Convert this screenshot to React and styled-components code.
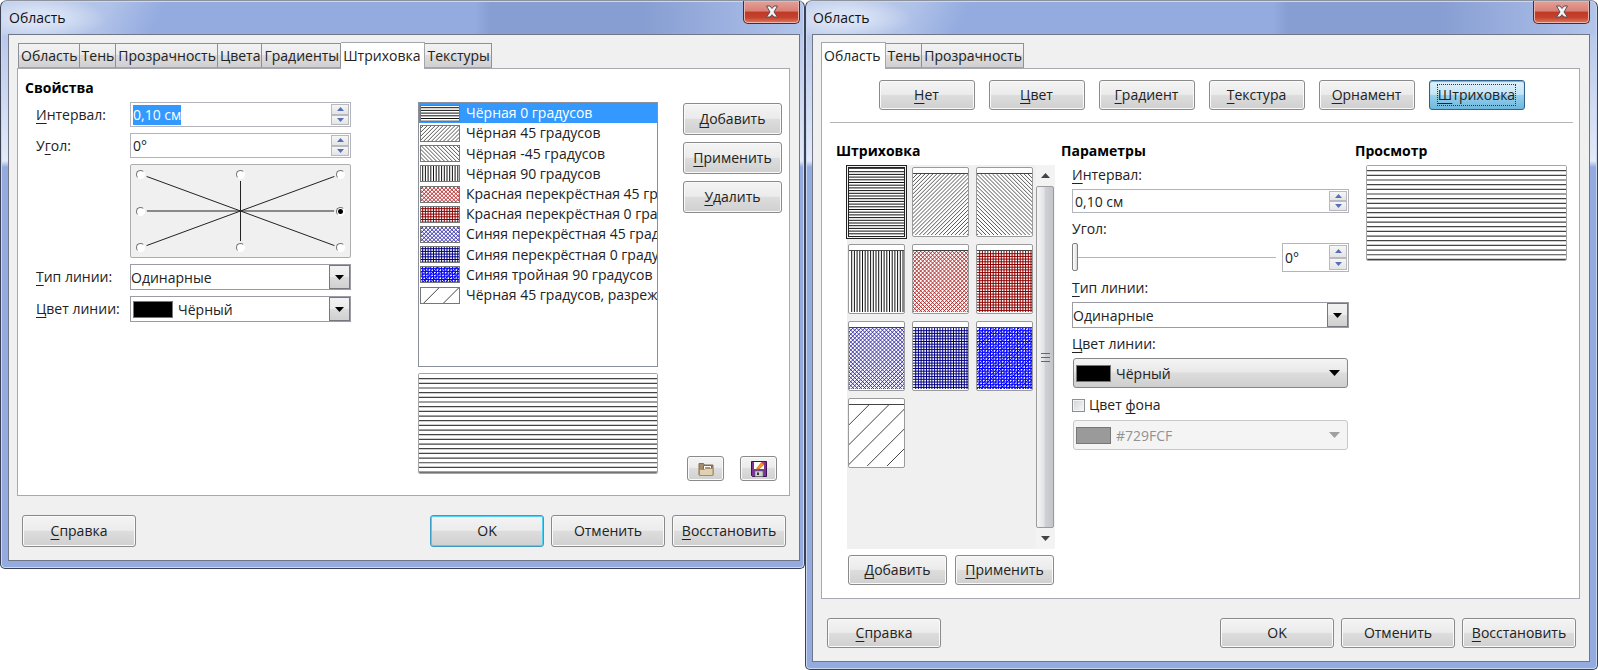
import React, { useEffect, useRef } from "react";
import styled, { createGlobalStyle, css } from "styled-components";

const GlobalStyle = createGlobalStyle`
  *, *::before, *::after {
    box-sizing: border-box;
  }

  body {
    margin: 0;
    background: #fff;
    color: #222;
    font-family: "Open Sans", "Noto Sans", sans-serif;
    font-size: 14px;
    line-height: 20px;
  }

  button, input, select {
    margin: 0;
    color: inherit;
    font: inherit;
  }
`;

const Desktop = styled.main`
  display: grid;
  grid-template-columns: 805fr 793fr;
  align-items: start;
`;

const Window = styled.section`
  min-width: 0;
  padding: ${(p) => (p.$right ? "0 7px 7px 6px" : "0 4px 7px 7px")};
  border: 1px solid #3a4152;
  border-top-color: #8d929c;
  border-radius: 7px 7px 5px 5px;
  background:
    radial-gradient(ellipse 70px 22px at 36px 17px, #d9e3f5 30%, transparent) no-repeat,
    linear-gradient(115deg, #bccbea 40px, #b0c2e8 100px, transparent 150px) 0 0 / 100% 34px no-repeat,
    linear-gradient(90deg, #93abdf 59%, #879ed2 61%, #879ed2 80%, #a4b8e4 94%, #b4c5ea) 0 0 / 100% 34px no-repeat,
    linear-gradient(#b9c8ea 34px, #e3eaf8 160px, #93abdf 166px);
  box-shadow: inset 0 0 0 1px #ccd8f1;
`;

const TitleBar = styled.header`
  display: flex;
  align-items: flex-start;
  justify-content: space-between;
  height: 33px;
`;

const WindowTitle = styled.h1`
  margin: 0;
  padding-top: 7px;
  padding-left: 1px;
  color: #111;
  font-size: 14px;
  font-weight: 400;
`;

const CloseButton = styled.button`
  display: flex;
  align-items: center;
  justify-content: center;
  width: 57px;
  height: 23px;
  padding: 0;
  border: 1px solid #5b2527;
  border-top: 0;
  border-radius: 0 0 5px 5px;
  background: linear-gradient(#e2a198, #d98076 46%, #bf3a26 50%, #c7422c 75%, #dd7a62);
  box-shadow: inset 0 0 0 1px #eab5ac;
`;

const Client = styled.div`
  padding: 7px 9px 13px 8px;
  border: 1px solid #717684;
  background: #f0f0f0;
`;

const TabBar = styled.div`
  display: flex;
  align-items: flex-end;
  height: 26px;
  padding-left: ${(p) => (p.$inset ? "1px" : "0")};
`;

const Tab = styled.button`
  height: 25px;
  padding: 1px 1px 0 2px;
  border: 1px solid #8f8f97;
  border-bottom-color: #a5a5ad;
  border-left-width: ${(p) => (p.$first ? "1px" : "0")};
  background: linear-gradient(#f2f2f2, #ebebeb 50%, #dddddd 50%, #d0d0d0);
  white-space: nowrap;

  ${(p) =>
    p.$active &&
    css`
      height: 27px;
      margin-bottom: -1px;
      padding: 0 4px 1px 2px;
      border-color: #a5a5ad;
      border-bottom: 0;
      background: #fff;
    `}
`;

const Panel = styled.div`
  padding: ${(p) => (p.$right ? "11px 6px 13px 8px" : "9px 7px 14px 7px")};
  border: 1px solid #a8a8b2;
  background: #fff;
`;

const Heading = styled.h2`
  margin: 0 0 4px;
  color: #000;
  font-size: 14px;
  font-weight: 700;
  line-height: 20px;
`;

const Footer = styled.footer`
  display: flex;
  gap: 7px;
  padding: ${(p) => (p.$right ? "19px 4px 0 6px" : "19px 4px 0 5px")};
`;

const Spacer = styled.div`
  flex: 1;
`;

const Button = styled.button`
  flex: none;
  width: ${(p) => p.$width}px;
  height: ${(p) => p.$height || 32}px;
  padding: 0;
  border: 1px solid #8a8a8a;
  border-radius: 3px;
  background: linear-gradient(#f4f4f4, #ebebeb 48%, #dddddd 50%, #d0d0d0);
  box-shadow: inset 0 0 0 1px #fafafa;
  white-space: nowrap;

  u {
    text-underline-offset: 3px;
  }

  ${(p) =>
    p.$default &&
    css`
      border-color: #3c9cc4;
      box-shadow: inset 0 0 0 1px #4fd0f4;
    `}

  ${(p) =>
    p.$pressed &&
    css`
      border-color: #2c628b;
      background: linear-gradient(#e2f2fb, #c3e4f6 48%, #98d1ef 50%, #6db7dd);
      box-shadow: inset 0 1px 1px #7fa9c4;
    `}
`;

const FocusRing = styled.span`
  display: inline-block;
  outline: 1px dotted #333;
`;

const HatchLayout = styled.div`
  display: grid;
  grid-template-columns: 1fr 240px 99px;
  gap: 25px;
`;

const Fields = styled.div`
  display: grid;
  grid-template-columns: 94px 1fr;
  align-content: start;
  gap: 6px 0;
  padding: 0 42px 0 11px;
`;

const Label = styled.label`
  display: block;
  padding-top: ${(p) => (p.$stacked ? "0" : "3px")};
  margin: ${(p) => (p.$stacked ? "6px 0 4px" : "0")};
  line-height: 20px;

  &:first-child {
    margin-top: 0;
  }

  u {
    text-underline-offset: 3px;
  }
`;

const SpinBox = styled.div`
  display: flex;
  width: ${(p) => (p.$width ? `${p.$width}px` : "100%")};
  height: ${(p) => p.$height || 25}px;
  padding: 1px;
  border: 1px solid #b4b4bc;
  background: #fff;
`;

const SpinInput = styled.input`
  flex: 1;
  min-width: 0;
  padding: 1px 0 0 1px;
  border: 0;
  outline: 0;
  background: transparent;

  &::selection {
    background: #3399ff;
    color: #fff;
  }
`;

const SpinButtons = styled.div`
  display: grid;
  grid-template-rows: 1fr 1fr;
  width: 18px;
`;

const SpinButton = styled.button`
  display: flex;
  align-items: center;
  justify-content: center;
  min-height: 0;
  padding: 0;
  border: 1px solid #b9b9c0;
  background: linear-gradient(#f6f6f6, #e4e4e6);
`;

const AngleBox = styled.div`
  position: relative;
  display: grid;
  grid-template-columns: repeat(3, 9px);
  justify-content: space-between;
  align-content: space-between;
  height: 94px;
  grid-column: 2;
  padding: 5px;
  border: 1px solid #adadad;
  border-radius: 2px;
  background: #f0f0f0;
`;

const AngleLines = styled.svg`
  position: absolute;
  inset: 0;
  width: 100%;
  height: 100%;
`;

const AngleRadio = styled.input`
  position: relative;
  width: 9px;
  height: 9px;
  appearance: none;
  border: 1px solid #fff;
  border-top-color: #777;
  border-left-color: #777;
  border-radius: 50%;
  background: #fff;
  box-shadow: 0 0 0 2px #f0f0f0;

  &:checked {
    background: radial-gradient(circle, #000 2px, #fff 3px);
  }
`;

const Combo = styled.div`
  display: flex;
  align-items: center;
  height: 26px;
  border: 1px solid #9b9ba3;
  background: #fff;
`;

const ComboSelect = styled.select`
  flex: 1;
  min-width: 0;
  height: 100%;
  padding: 1px 0 0 0;
  appearance: none;
  border: 0;
  outline: 0;
  background: transparent;
  opacity: 1;
`;

const ComboArrow = styled.span`
  display: flex;
  align-items: center;
  justify-content: center;
  width: 21px;
  height: 100%;
  border: 1px solid #77777d;
  background: linear-gradient(#f2f2f2, #ebebeb 50%, #dddddd 50%, #d0d0d0);
`;

const ColorButton = styled.div`
  display: flex;
  align-items: center;
  height: 30px;
  margin: 0 1px;
  padding: 0 7px 0 0;
  border: 1px solid ${(p) => (p.$disabled ? "#c8c8c8" : "#868686")};
  border-radius: 3px;
  background: ${(p) =>
    p.$disabled ? "#f4f4f4" : "linear-gradient(#f4f4f4, #e9e9e9 45%, #dddddd 50%, #cecece)"};
  color: ${(p) => (p.$disabled ? "#929292" : "inherit")};
`;

const Swatch = styled.span`
  flex: none;
  width: ${(p) => p.$width || 40}px;
  height: 17px;
  margin: 0 5px 0 2px;
  border: 1px solid #777;
  background: ${(p) => p.$color};
`;

const HatchList = styled.ul`
  display: grid;
  grid-template-rows: repeat(13, 1fr);
  height: 265px;
  margin: 0 0 6px;
  padding: 0;
  overflow: hidden;
  border: 1px solid #8b8f9b;
  list-style: none;
`;

const HatchItem = styled.li`
  display: flex;
  align-items: center;
  gap: 6px;
  min-width: 0;
  padding-left: 1px;
  overflow: hidden;
  background: ${(p) => (p.$selected ? "#3399ff" : "transparent")};
  color: ${(p) => (p.$selected ? "#fff" : "inherit")};
  line-height: 20px;
  white-space: nowrap;
`;

const Drawing = styled.svg`
  display: block;
  flex: none;
  background: #fff;
`;

const PreviewColumn = styled.div`
  padding-bottom: 7px;
`;

const Preview = styled.div`
  height: ${(p) => p.$height}px;
  overflow: hidden;
  border: 1px solid #a6a6a6;
  border-radius: 2px;
`;

const ActionColumn = styled.div`
  display: flex;
  flex-direction: column;
  gap: 7px;
  padding-top: 1px;
`;

const FileActions = styled.div`
  display: flex;
  gap: 16px;
  margin-top: auto;
  padding-left: 4px;
`;

const IconButton = styled(Button)`
  display: flex;
  align-items: center;
  justify-content: center;
`;

const ModeBar = styled.nav`
  display: flex;
  justify-content: center;
  gap: 14px;
  padding-bottom: 12px;
  margin-bottom: 18px;
  border-bottom: 1px solid #b4b4b4;
`;

const AreaLayout = styled.div`
  display: grid;
  grid-template-columns: 219px 1fr 212px;
  gap: 6px;
  padding: 0 6px;
`;

const Indented = styled.div`
  padding-left: 11px;
`;

const Gallery = styled.div`
  display: flex;
  justify-content: space-between;
  height: 384px;
  margin-bottom: 6px;
  background: #f0f0f0;
`;

const Thumbs = styled.div`
  display: grid;
  grid-template-columns: repeat(3, 57px);
  grid-auto-rows: 70px;
  align-content: start;
  gap: 7px;
  padding: 2px 0 0 1px;
`;

const Thumb = styled.button`
  padding: 0;
  overflow: hidden;
  border: 1px solid #9a9a9a;
  border-radius: 2px;
  background: #fff;

  ${(p) =>
    p.$selected &&
    css`
      border: 1px solid #222;
      border-radius: 0;
      outline: 1px solid #222;
      outline-offset: 1px;
    `}
`;

const ThumbFace = styled.span`
  display: block;
  margin-top: ${(p) => (p.$selected ? "0" : "3px")};
  border-top: 1px solid #444;
`;

const ScrollBar = styled.div`
  display: flex;
  flex-direction: column;
  width: 19px;
  background: #f3f3f3;
`;

const ScrollArrow = styled.button`
  display: flex;
  align-items: center;
  justify-content: center;
  height: 21px;
  padding: 0;
  border: 0;
  background: transparent;
`;

const ScrollThumb = styled.div`
  display: flex;
  flex: 1;
  align-items: center;
  justify-content: center;
  margin-right: 1px;
  border: 1px solid #9b9b9b;
  border-radius: 2px;
  background: linear-gradient(90deg, #f5f5f5, #e2e3e6 45%, #d0d1d5 50%, #c4c5ca);
`;

const ButtonRow = styled.div`
  display: flex;
  gap: 8px;
  padding-left: 1px;
`;

const SliderRow = styled.div`
  display: flex;
  gap: 6px;
`;

const Slider = styled.input`
  flex: 1;
  min-width: 0;
  height: 28px;
  appearance: none;
  background: linear-gradient(#b5b5b5, #b5b5b5) center / 100% 1px no-repeat;

  &::-webkit-slider-thumb {
    width: 6px;
    height: 28px;
    appearance: none;
    border: 1px solid #808080;
    border-radius: 2px;
    background: linear-gradient(90deg, #fff, #ddd);
  }
`;

const CheckRow = styled.label`
  display: flex;
  align-items: center;
  gap: 4px;
  margin: 7px 0 5px;

  u {
    text-underline-offset: 3px;
  }
`;

const CheckBox = styled.input`
  width: 13px;
  height: 13px;
  appearance: none;
  border: 1px solid #8e8f8f;
  background: linear-gradient(135deg, #cfd3d8, #f8f8f8);
  box-shadow: inset 0 0 0 1px #f4f4f4;
`;

// "_" marks the access key, as in the dialog resources
const Mnemonic = ({ text }) => {
  const at = text.indexOf("_");
  if (at < 0) return text;
  return (
    <>
      {text.slice(0, at)}
      <u>{text[at + 1]}</u>
      {text.slice(at + 2)}
    </>
  );
};

const Triangle = ({ up, size = 9, color = "#000" }) => (
  <svg width={size} height={Math.ceil(size / 2)} viewBox="0 0 10 5" preserveAspectRatio="none">
    <path d={up ? "M0 5 5 0 10 5Z" : "M0 0 5 5 10 0Z"} fill={color} />
  </svg>
);

const hatchPath = (angle, w, h, pitch) => {
  const parts = [];
  if (angle === 0) {
    for (let y = pitch; y <= h; y += pitch) parts.push(`M0 ${y}H${w}`);
  } else if (angle === 90) {
    for (let x = pitch; x <= w; x += pitch) parts.push(`M${x} 0V${h}`);
  } else {
    const step = pitch * Math.SQRT2;
    for (let x = step; x < w + h; x += step) {
      parts.push(angle === 45 ? `M${x} 0L${x - h} ${h}` : `M${w - x} 0L${w - x + h} ${h}`);
    }
  }
  return parts.join("");
};

const Hatch = ({ hatch, width, height, framed, pitch }) => (
  <Drawing width={width} height={height} aria-hidden="true">
    {hatch.angles.map((angle) => (
      <path
        key={angle}
        d={hatchPath(angle, width, height, pitch || hatch.pitch)}
        stroke={pitch ? "#444" : hatch.color}
        strokeWidth={pitch ? 1.2 : 1}
      />
    ))}
    {framed && <rect x=".5" y=".5" width={width - 1} height={height - 1} fill="none" stroke="#777" />}
  </Drawing>
);

const hatches = [
  { name: "Чёрная 0 градусов", color: "#111", angles: [0], pitch: 2.7 },
  { name: "Чёрная 45 градусов", color: "#555", angles: [45], pitch: 2.8 },
  { name: "Чёрная -45 градусов", color: "#555", angles: [-45], pitch: 2.8 },
  { name: "Чёрная 90 градусов", color: "#111", angles: [90], pitch: 2.7 },
  { name: "Красная перекрёстная 45 градусов", color: "#b03030", angles: [45, -45], pitch: 2.8 },
  { name: "Красная перекрёстная 0 градусов", color: "#8b0000", angles: [0, 90], pitch: 2.7 },
  { name: "Синяя перекрёстная 45 градусов", color: "#3a35a8", angles: [45, -45], pitch: 2.8 },
  { name: "Синяя перекрёстная 0 градусов", color: "#000080", angles: [0, 90], pitch: 2.7 },
  { name: "Синяя тройная 90 градусов", color: "#0000ff", angles: [0, 90, 45], pitch: 2.7 },
  { name: "Чёрная 45 градусов, разреженная", color: "#444", angles: [45], pitch: 14 },
];

const angleSteps = [135, 90, 45, 180, null, 0, 225, 270, 315];

const CloseIcon = () => (
  <svg width="16" height="14" viewBox="0 0 16 14">
    <path d="M2.500 1H6L8 3.500 10 1h3.500L10 7l3.500 5H10L8 9.700 6 12H2.500L6 7Z" fill="#f4f4f4" stroke="#5f4a52" strokeWidth="1" />
  </svg>
);

const FolderIcon = () => (
  <svg width="16" height="16" viewBox="0 0 16 16">
    <path d="M1 2.5h4.5l1 1.5H15v10H1Z" fill="#a58d6c" stroke="#846d4d" />
    <path d="M5.5 4.5h8V9h-8Z" fill="#fff" stroke="#6f6a62" />
    <path d="M7 6.500h5" stroke="#999" />
    <path d="M1.5 14.5V8.5h5l1-1h7.5v7Z" fill="#e2d0b0" stroke="#a38c67" />
  </svg>
);

const SaveIcon = () => (
  <svg width="16" height="16" viewBox="0 0 16 16">
    <path d="M.5.5h15v15h-14l-1-1Z" fill="#7a3596" stroke="#3b1250" />
    <path d="M3 1h10v7H3Z" fill="#fff" />
    <path d="M4 10h8v5.500H4Z" fill="#cfd3d4" stroke="#666" strokeWidth=".6" />
    <path d="M6 11.500h2V14H6Z" fill="#333" />
    <path d="M6 7 10.500 1.500 13 3.500 8 8 5.500 8.500Z" fill="#f59a1c" stroke="#b3550b" strokeWidth=".6" />
    <path d="M10.500 1.500 12 .5l1.500 1.500-.5 1.500Z" fill="#d8342a" />
  </svg>
);

const Spin = ({ id, value, width, height, selected, label }) => {
  const input = useRef(null);

  useEffect(() => {
    if (selected) {
      input.current.focus();
      input.current.select();
    }
  }, [selected]);

  return (
    <SpinBox $width={width} $height={height}>
      <SpinInput id={id} ref={input} defaultValue={value} aria-label={label} />
      <SpinButtons>
        <SpinButton aria-label="Больше">
          <Triangle up size={7} color="#5570b8" />
        </SpinButton>
        <SpinButton aria-label="Меньше">
          <Triangle size={7} color="#5570b8" />
        </SpinButton>
      </SpinButtons>
    </SpinBox>
  );
};

const Dropdown = ({ id, value, color }) => (
  <Combo>
    {color && <Swatch $color={color} />}
    <ComboSelect id={id}>
      <option>{value}</option>
    </ComboSelect>
    <ComboArrow>
      <Triangle />
    </ComboArrow>
  </Combo>
);

const ColorSelect = ({ id, value, color, disabled, label }) => (
  <ColorButton $disabled={disabled}>
    <Swatch $color={color} $width={35} />
    <ComboSelect id={id} disabled={disabled} aria-label={label}>
      <option>{value}</option>
    </ComboSelect>
    <Triangle size={11} color={disabled ? "#a0a0a0" : "#000"} />
  </ColorButton>
);

const Tabs = ({ items, active, inset }) => (
  <TabBar role="tablist" $inset={inset}>
    {items.map((item, i) => (
      <Tab key={item} role="tab" aria-selected={item === active} $active={item === active} $first={i === 0}>
        {item}
      </Tab>
    ))}
  </TabBar>
);

const Dialog = ({ right, children }) => (
  <Window $right={right}>
    <TitleBar>
      <WindowTitle>Область</WindowTitle>
      <CloseButton aria-label="Закрыть">
        <CloseIcon />
      </CloseButton>
    </TitleBar>
    <Client>{children}</Client>
  </Window>
);

const DialogFooter = ({ right, height }) => (
  <Footer $right={right}>
    <Button $width={114} $height={height}>
      <Mnemonic text="_Справка" />
    </Button>
    <Spacer />
    <Button $width={114} $height={height} $default={!right}>
      OK
    </Button>
    <Button $width={114} $height={height}>
      Отменить
    </Button>
    <Button $width={114} $height={height}>
      <Mnemonic text="_Восстановить" />
    </Button>
  </Footer>
);

const HatchDialog = () => (
  <Dialog>
    <Tabs
      inset
      items={["Область", "Тень", "Прозрачность", "Цвета", "Градиенты", "Штриховка", "Текстуры"]}
      active="Штриховка"
    />
    <Panel>
      <Heading>Свойства</Heading>
      <HatchLayout>
        <Fields>
          <Label htmlFor="distance">
            <Mnemonic text="_Интервал:" />
          </Label>
          <Spin id="distance" value="0,10 см" selected />
          <Label htmlFor="angle">
            <Mnemonic text="У_гол:" />
          </Label>
          <Spin id="angle" value="0°" />
          <AngleBox>
            <AngleLines viewBox="0 0 219 92" preserveAspectRatio="none">
              <path
                d="M9 9 210 83M9 83 210 9M9 46H210M109.500 9V83"
                fill="none"
                stroke="#222"
                vectorEffect="non-scaling-stroke"
              />
            </AngleLines>
            {angleSteps.map((step) =>
              step === null ? (
                <span key="center" />
              ) : (
                <AngleRadio
                  key={step}
                  type="radio"
                  name="angle-step"
                  aria-label={`${step}°`}
                  defaultChecked={step === 0}
                />
              )
            )}
          </AngleBox>
          <Label htmlFor="line-type">
            <Mnemonic text="_Тип линии:" />
          </Label>
          <Dropdown id="line-type" value="Одинарные" />
          <Label htmlFor="line-color">
            <Mnemonic text="_Цвет линии:" />
          </Label>
          <Dropdown id="line-color" value="Чёрный" color="#000" />
        </Fields>
        <PreviewColumn>
          <HatchList role="listbox" aria-label="Штриховка">
            {hatches.map((hatch, i) => (
              <HatchItem key={hatch.name} role="option" aria-selected={i === 0} $selected={i === 0}>
                <Hatch hatch={hatch} width={40} height={17} framed />
                {hatch.name}
              </HatchItem>
            ))}
          </HatchList>
          <Preview $height={101}>
            <Hatch hatch={hatches[0]} width={238} height={99} pitch={4.67} />
          </Preview>
        </PreviewColumn>
        <ActionColumn>
          <Button $width={99}>
            <Mnemonic text="_Добавить" />
          </Button>
          <Button $width={99}>
            <Mnemonic text="_Применить" />
          </Button>
          <Button $width={99}>
            <Mnemonic text="_Удалить" />
          </Button>
          <FileActions>
            <IconButton $width={37} $height={25} aria-label="Загрузить">
              <FolderIcon />
            </IconButton>
            <IconButton $width={37} $height={25} aria-label="Сохранить">
              <SaveIcon />
            </IconButton>
          </FileActions>
        </ActionColumn>
      </HatchLayout>
    </Panel>
    <DialogFooter />
  </Dialog>
);

const AreaDialog = () => (
  <Dialog right>
    <Tabs items={["Область", "Тень", "Прозрачность"]} active="Область" />
    <Panel $right>
      <ModeBar>
        {["_Нет", "_Цвет", "_Градиент", "_Текстура", "_Орнамент"].map((mode) => (
          <Button key={mode} $width={96} $height={30}>
            <Mnemonic text={mode} />
          </Button>
        ))}
        <Button $width={96} $height={30} $pressed aria-pressed="true">
          <FocusRing>
            <Mnemonic text="_Штриховка" />
          </FocusRing>
        </Button>
      </ModeBar>
      <AreaLayout>
        <div>
          <Heading>Штриховка</Heading>
          <Indented>
            <Gallery>
              <Thumbs>
                {hatches.map((hatch, i) => (
                  <Thumb key={hatch.name} $selected={i === 0} aria-label={hatch.name}>
                    <ThumbFace $selected={i === 0}>
                      <Hatch hatch={hatch} width={55} height={i === 0 ? 67 : 61} />
                    </ThumbFace>
                  </Thumb>
                ))}
              </Thumbs>
              <ScrollBar>
                <ScrollArrow aria-label="Вверх">
                  <Triangle up color="#444" />
                </ScrollArrow>
                <ScrollThumb>
                  <svg width="9" height="10" viewBox="0 0 9 10">
                    <path d="M0 1.500H9M0 5.500H9M0 9.500H9" stroke="#666" />
                  </svg>
                </ScrollThumb>
                <ScrollArrow aria-label="Вниз">
                  <Triangle color="#444" />
                </ScrollArrow>
              </ScrollBar>
            </Gallery>
            <ButtonRow>
              <Button $width={99} $height={30}>
                <Mnemonic text="_Добавить" />
              </Button>
              <Button $width={99} $height={30}>
                <Mnemonic text="_Применить" />
              </Button>
            </ButtonRow>
          </Indented>
        </div>
        <div>
          <Heading>Параметры</Heading>
          <Indented>
            <Label $stacked htmlFor="area-distance">
              <Mnemonic text="_Интервал:" />
            </Label>
            <Spin id="area-distance" value="0,10 см" height={24} />
            <Label $stacked htmlFor="area-angle">
              Угол:
            </Label>
            <SliderRow>
              <Slider id="area-angle" type="range" min="0" max="360" defaultValue="0" />
              <Spin value="0°" width={67} height={29} label="Угол, градусы" />
            </SliderRow>
            <Label $stacked htmlFor="area-line-type">
              <Mnemonic text="_Тип линии:" />
            </Label>
            <Dropdown id="area-line-type" value="Одинарные" />
            <Label $stacked htmlFor="area-line-color">
              <Mnemonic text="_Цвет линии:" />
            </Label>
            <ColorSelect id="area-line-color" value="Чёрный" color="#000" />
            <CheckRow>
              <CheckBox type="checkbox" />
              <span>
                <Mnemonic text="Цвет _фона" />
              </span>
            </CheckRow>
            <ColorSelect value="#729FCF" color="#9a9a9a" disabled label="Цвет фона" />
          </Indented>
        </div>
        <div>
          <Heading>Просмотр</Heading>
          <Indented>
            <Preview $height={96}>
              <Hatch hatch={hatches[0]} width={199} height={94} pitch={4.67} />
            </Preview>
          </Indented>
        </div>
      </AreaLayout>
    </Panel>
    <DialogFooter right height={30} />
  </Dialog>
);

const App = () => (
  <>
    <GlobalStyle />
    <Desktop>
      <HatchDialog />
      <AreaDialog />
    </Desktop>
  </>
);

export default App;
